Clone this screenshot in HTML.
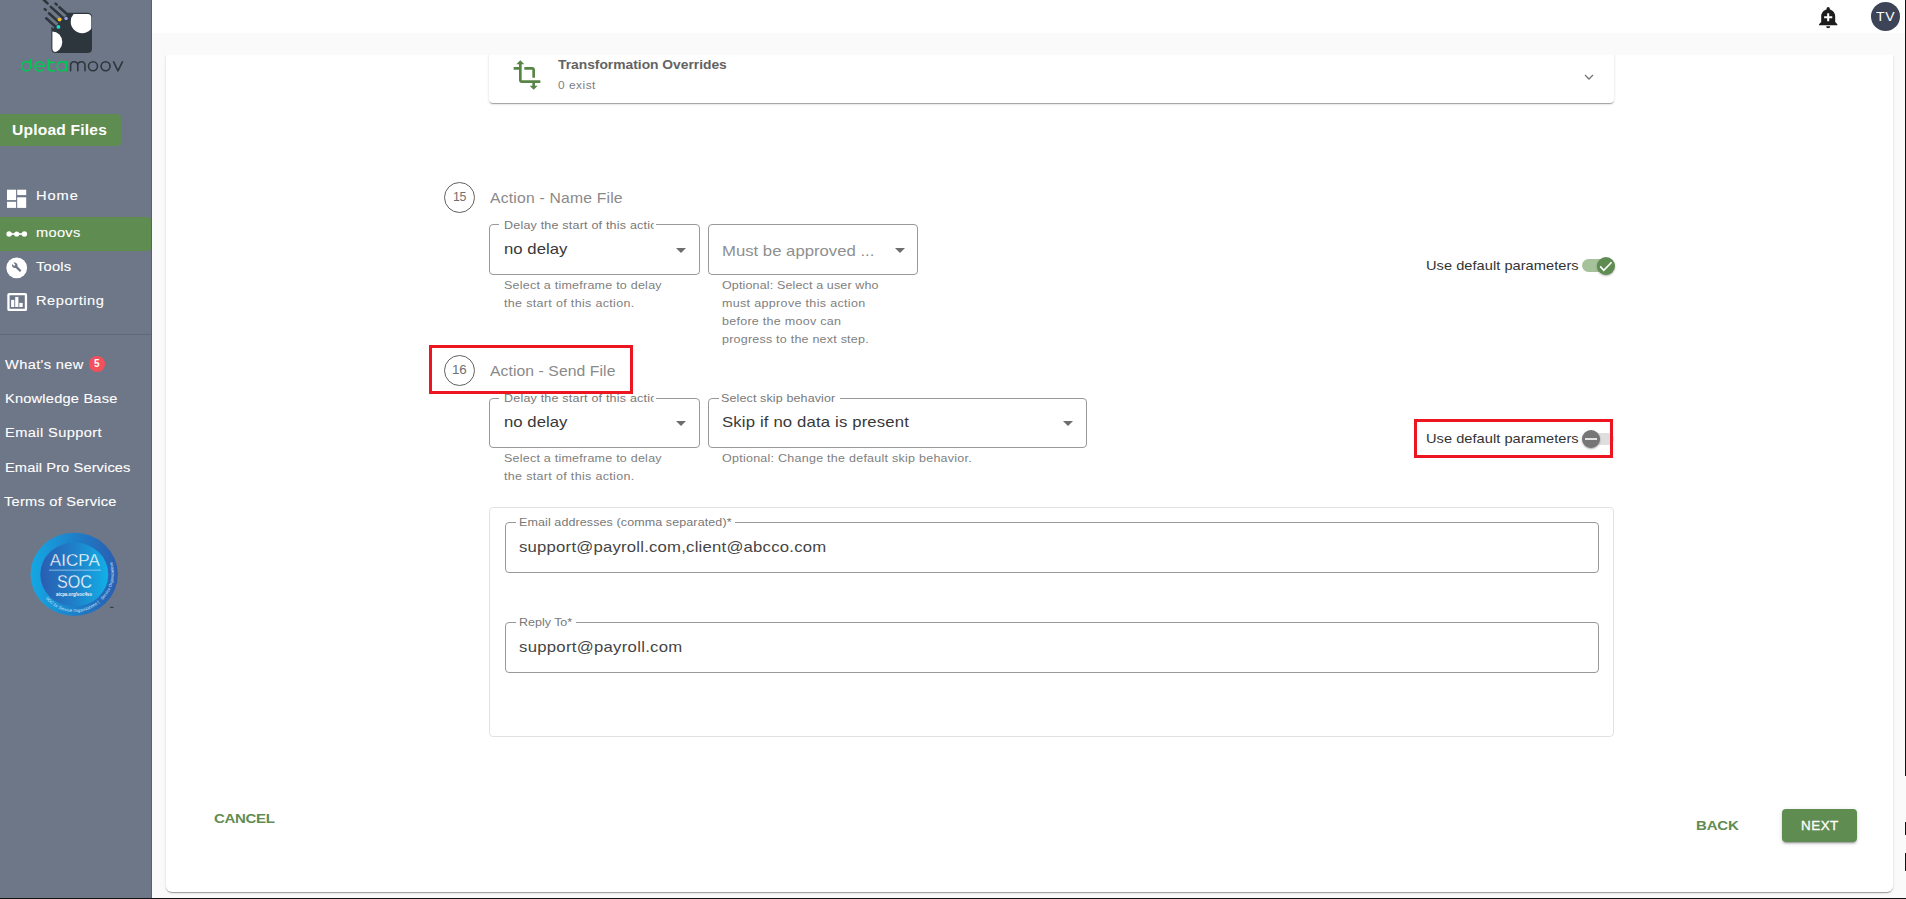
<!DOCTYPE html>
<html lang="en"><head><meta charset="utf-8"><title>detamoov</title>
<style>
*{box-sizing:border-box;margin:0;padding:0}
html,body{width:1906px;height:899px;overflow:hidden;background:#fafafa;font-family:"Liberation Sans",sans-serif;}
body{position:relative}
.abs{position:absolute}
.t{position:absolute;white-space:nowrap;display:block;transform-origin:0 50%}
#sidebar{position:absolute;left:0;top:0;width:152px;height:899px;background:#6e7788;border-right:1px solid #59616f}
#topbar{position:absolute;left:152px;top:0;width:1754px;height:33px;background:#fff}
#card{position:absolute;left:166px;top:55px;width:1727px;height:837px;background:#fff;border-radius:0 0 6px 6px;clip-path:inset(0 -6px -6px -6px);box-shadow:0 2px 1px -1px rgba(0,0,0,.2),0 1px 1px 0 rgba(0,0,0,.14),0 1px 3px 0 rgba(0,0,0,.12)}
#acc{position:absolute;left:489px;top:40px;width:1125px;height:63px;background:#fff;border-radius:4px;box-shadow:0 2px 1px -1px rgba(0,0,0,.2),0 1px 1px 0 rgba(0,0,0,.14),0 1px 3px 0 rgba(0,0,0,.12);clip-path:inset(15px -6px -6px -6px)}
.upload{position:absolute;left:0;top:114px;width:121px;height:32px;background:#5f8c50;border-radius:0 4px 4px 0}
.navsel{position:absolute;left:0;top:217px;width:151px;height:34px;background:#5f8c50;border-radius:0 4px 4px 0}
.divider{position:absolute;left:0;top:334px;width:151px;height:1px;background:#5f6878}
.badge{position:absolute;left:89px;top:356px;width:16px;height:16px;border-radius:50%;background:#f4505c}
.num{position:absolute;width:31px;height:31px;border:1px solid #616161;border-radius:50%}
.sel{position:absolute;height:50px;border:1px solid #999;border-radius:4px;background:#fff}
.notch{position:absolute;height:3px;background:#fff}
.arrow{position:absolute;width:0;height:0;border-left:5px solid transparent;border-right:5px solid transparent;border-top:5px solid #6d6d6d}
.redbox{position:absolute;border:3px solid #ed1620}
.panel{position:absolute;left:489px;top:507px;width:1125px;height:230px;border:1px solid #e2e2e2;border-radius:4px}
.track{position:absolute;border-radius:7px}
.thumb{position:absolute;border-radius:50%}
.nextbtn{position:absolute;left:1782px;top:809px;width:75px;height:33px;background:#5f8c50;border-radius:4px;box-shadow:0 3px 1px -2px rgba(0,0,0,.2),0 2px 2px 0 rgba(0,0,0,.14),0 1px 5px 0 rgba(0,0,0,.12)}
.avatar{position:absolute;left:1871.1px;top:1.8px;width:29.1px;height:29.1px;border-radius:50%;background:#3e4457}
.vline{position:absolute;left:1904.7px;width:1.3px;background:#111}
.hline{position:absolute;left:0;top:897.6px;width:1906px;height:1.4px;background:#111}

</style></head>
<body>
<div id="topbar"></div>
<div id="card"></div>
<div id="acc"></div>
<div id="sidebar"></div>

<!-- logo -->
<svg class="abs" style="left:0;top:0" width="152" height="100" viewBox="0 0 152 100">
  <defs><clipPath id="lc"><rect x="52.4" y="13.9" width="38.9" height="38.2" rx="3.6"/></clipPath></defs>
  <g stroke="#2d353d" stroke-width="2.6" stroke-linecap="round" fill="none">
    <path d="M43.5 -0.5 L47.5 3.4"/><path d="M50.8 6.9 L64 18.8"/>
    <path d="M55.6 3.6 L56.7 4.6"/><path d="M59.4 7.3 L68 15"/>
    <path d="M44.8 9.1 L45.7 9.9"/><path d="M49 13.3 L60 23.200"/>
    <path d="M46.200 18.3 L57 28"/>
  </g>
  <path d="M66 12.8 H87.4 Q92 12.8 92 17.4 V48.5 Q92 53.1 87.4 53.1 H56 Q51.4 53.1 51.4 48.5 V26.6 L53.4 28.4 L67.6 14.2 Z" fill="#2d353d"/>
  <g clip-path="url(#lc)" fill="#fff">
    <circle cx="82.2" cy="21.7" r="11.5"/>
    <ellipse cx="52.3" cy="42" rx="10" ry="10.600"/>
  </g>
  <circle cx="59.5" cy="19.6" r="1.800" fill="#f8c31c"/>
  <circle cx="66.100" cy="18.400" r="1.700" fill="#9da3fb"/>
  <circle cx="58.400" cy="26.900" r="1.900" fill="#14dccf"/>
  <!-- wordmark -->
  <g fill="none" stroke="#00c853" stroke-width="1.65" stroke-linecap="round" stroke-linejoin="round">
    <circle cx="26.2" cy="66.2" r="4.6"/><path d="M30.8 59.5 V66.2"/>
    <path d="M35.2 66.2 H44.3 A4.6 4.6 0 1 0 42.8 69.8"/>
    <path d="M48.6 59.8 V68 Q48.6 70.8 51.4 70.8 H54.2 M48.6 62.4 H54"/>
    <circle cx="61.8" cy="66.2" r="4.6"/><path d="M66.4 61.6 V70.8"/>
  </g>
  <g fill="none" stroke="#2d353d" stroke-width="1.6" stroke-linecap="round" stroke-linejoin="round">
    <path d="M70.6 70.8 V65.5 Q70.6 61.8 74.2 61.8 Q77.8 61.8 77.8 65.5 V70.8 M77.8 65.5 Q77.8 61.8 81.4 61.8 Q85 61.8 85 65.5 V70.8"/>
    <circle cx="93" cy="66.3" r="4.5"/>
    <circle cx="105.6" cy="66.3" r="4.5"/>
    <path d="M113.6 61.8 L118 70.8 L122.4 61.8"/>
  </g>
</svg>

<div class="upload"></div>
<div class="navsel"></div>
<div class="divider"></div>
<div class="badge"></div>

<!-- nav icons -->
<svg class="abs" style="left:0;top:180px" width="40" height="140" viewBox="0 180 40 140">
  <g fill="#fff">
    <rect x="7" y="189.700" width="9.100" height="10.400"/><rect x="7" y="201.800" width="9.100" height="6.100"/>
    <rect x="17.200" y="189.700" width="9" height="5.400"/><rect x="17.200" y="197.300" width="9" height="10.600"/>
    <circle cx="9.100" cy="234" r="2.700"/><circle cx="16.700" cy="234" r="2.600"/><circle cx="24.400" cy="234" r="2.700"/><rect x="9" y="233.200" width="15.400" height="1.600"/>
    <circle cx="16.7" cy="267.8" r="10.4"/>
  </g>
  <g transform="translate(11.600 262.100) scale(0.425)"><path fill="#6e7788" d="M22.7 19l-9.1-9.1c.9-2.3.4-5-1.5-6.9-2-2-5-2.4-7.4-1.3L9 6 6 9 1.6 4.700C.4 7.1.9 10.1 2.9 12.1c1.9 1.9 4.6 2.4 6.9 1.5l9.1 9.1c.4.4 1 .4 1.4 0l2.300-2.300c.5-.4.5-1.100.1-1.400z"/></g>
  <rect x="8.450" y="294.050" width="17.500" height="15.900" rx="0.800" fill="none" stroke="#fff" stroke-width="2.300"/>
  <g fill="#fff"><rect x="11.100" y="299.900" width="3.200" height="7.100"/><rect x="15.200" y="296.900" width="3.200" height="10.100"/><rect x="19.300" y="302.900" width="3.400" height="4.100"/></g>
</svg>

<!-- AICPA badge -->
<svg class="abs" style="left:28px;top:528px" width="96" height="92" viewBox="28 528 96 92">
  <defs>
    <linearGradient id="g1" x1="0" y1="0" x2="1" y2="0"><stop offset="0" stop-color="#14a8e4"/><stop offset="0.55" stop-color="#1f7cc6"/><stop offset="1" stop-color="#2a5db0"/></linearGradient>
    <linearGradient id="g2" x1="0" y1="0" x2="1" y2="0"><stop offset="0" stop-color="#2a5db2"/><stop offset="0.5" stop-color="#1f80c8"/><stop offset="1" stop-color="#12b0e8"/></linearGradient>
    <path id="arc" d="M 45.5 598.5 A 37.5 37.5 0 0 0 100.5 601.5"/>
    <path id="arc2" d="M 102.500 600 A 38 38 0 0 0 111.500 560"/>
  </defs>
  <ellipse cx="74.2" cy="574.3" rx="43.700" ry="41.600" fill="url(#g1)"/>
  <ellipse cx="74.3" cy="574.500" rx="34" ry="32" fill="url(#g2)"/>
  <text x="74.800" y="565.500" font-family="Liberation Sans, sans-serif" font-size="17" fill="#fff" text-anchor="middle" textLength="50" lengthAdjust="spacingAndGlyphs" stroke="url(#g2)" stroke-width="0.35">AICPA</text>
  <rect x="49" y="569.800" width="52" height="0.6" fill="#cfe6f7"/>
  <text x="74.500" y="587.800" font-family="Liberation Sans, sans-serif" font-size="17.500" fill="#fff" text-anchor="middle" textLength="35" lengthAdjust="spacingAndGlyphs" stroke="url(#g2)" stroke-width="0.35">SOC</text>
  <text x="74" y="596" font-family="Liberation Sans, sans-serif" font-size="4.600" font-weight="700" fill="#e8f4fc" text-anchor="middle" textLength="36" lengthAdjust="spacingAndGlyphs">aicpa.org/soc4so</text>
  <text font-family="Liberation Sans, sans-serif" font-size="4.200" fill="#d4ecfa"><textPath href="#arc" textLength="60" lengthAdjust="spacingAndGlyphs">SOC for Service Organizations  |</textPath></text>
  <text font-family="Liberation Sans, sans-serif" font-size="4.200" fill="#d4ecfa"><textPath href="#arc2" textLength="41" lengthAdjust="spacingAndGlyphs">Service Organizations</textPath></text>
  <rect x="110" y="606.800" width="3.600" height="1" fill="#333"/>
</svg>

<!-- top bar -->
<svg class="abs" style="left:1815.9px;top:4.800px" width="24.400" height="24.400" viewBox="0 0 24 24"><path fill="#1c1c1c" d="M10.010 21.010c0 1.100.89 1.990 1.990 1.990s1.990-.89 1.990-1.990h-3.980zm8.870-4.190V11c0-3.250-2.250-5.970-5.290-6.690v-.72C13.590 2.710 12.880 2 12 2s-1.590.71-1.590 1.590v.72C7.370 5.030 5.120 7.750 5.120 11v5.820L3 18.940V20h18v-1.060l-2.120-2.120zM16 13.010h-3v3h-2v-3H8V11h3V8h2v3h3v2.010z"/></svg>
<div class="avatar"></div>

<!-- accordion contents -->
<svg class="abs" style="left:510.800px;top:59px" width="32" height="32" viewBox="0 0 24 24"><path fill="#588547" d="M22 18v-2H8V4h2L7 1 4 4h2v2H2v2h4v8c0 1.100.9 2 2 2h8v2h-2l3 3 3-3h-2v-2h4zM10 8h6v6h2V8c0-1.100-.9-2-2-2h-6v2z"/></svg>
<svg class="abs" style="left:1583.200px;top:72.400px" width="12" height="10" viewBox="0 0 12 10"><path d="M2 3 L6 7 L10 3" fill="none" stroke="#757575" stroke-width="1.300"/></svg>

<!-- section 1 -->
<div class="num" style="left:444px;top:182px"></div>
<div class="sel" style="left:489px;top:224px;width:211px;height:51px"></div>
<div class="notch" style="left:499px;top:223px;width:157px"></div>
<div class="arrow" style="left:676px;top:248px"></div>
<div class="sel" style="left:708px;top:224px;width:210px;height:51px"></div>
<div class="arrow" style="left:894.500px;top:248px"></div>
<div class="track" style="left:1582px;top:258.900px;width:30.500px;height:13.100px;background:#a5c29a"></div>
<div class="thumb" style="left:1596.700px;top:257px;width:18px;height:18px;background:#5f8c50;box-shadow:0 1px 2px rgba(0,0,0,.3)"></div>
<svg class="abs" style="left:1596.700px;top:257px" width="18" height="18" viewBox="0 0 18 18"><path d="M3.200 9.400 L6.800 13.300 L14.600 5.300" fill="none" stroke="#fff" stroke-width="1.600"/></svg>

<!-- section 2 -->
<div class="num" style="left:444px;top:355px"></div>
<div class="sel" style="left:489px;top:398px;width:211px"></div>
<div class="notch" style="left:499px;top:397px;width:157px"></div>
<div class="arrow" style="left:676px;top:421px"></div>
<div class="sel" style="left:708px;top:398px;width:379px"></div>
<div class="notch" style="left:719px;top:397px;width:121px"></div>
<div class="arrow" style="left:1063px;top:421px"></div>
<div class="track" style="left:1584px;top:433.200px;width:29.500px;height:11.600px;background:#dedede"></div>
<div class="thumb" style="left:1582px;top:430px;width:18px;height:18px;background:#767676;box-shadow:0 1px 2px rgba(0,0,0,.35)"></div>
<div class="abs" style="left:1585.300px;top:438px;width:11.700px;height:2px;background:#e2e2e2"></div>

<!-- email panel -->
<div class="panel"></div>
<div class="sel" style="left:505px;top:522px;width:1094px;height:51px"></div>
<div class="notch" style="left:516px;top:521px;width:219px"></div>
<div class="sel" style="left:505px;top:622px;width:1094px;height:51px"></div>
<div class="notch" style="left:516px;top:621px;width:60px"></div>

<div class="nextbtn"></div>


<div class="redbox" style="left:429px;top:345px;width:204px;height:49px"></div>
<div class="redbox" style="left:1414px;top:419px;width:199px;height:39px"></div>
<div class="vline" style="top:0;height:776.200px"></div>
<div class="vline" style="top:821.800px;height:13.200px"></div>
<div class="vline" style="top:852.700px;height:18.500px"></div>
<div class="hline"></div>

<span class="t" style="left:12.00px;top:122.78px;font-size:14.2px;line-height:14.2px;font-weight:700;color:#fff;letter-spacing:0.169px;transform:scaleX(1.1);"><span id="upload">Upload Files</span></span>
<span class="t" style="left:36.00px;top:189.92px;font-size:12.5px;line-height:12.5px;font-weight:400;color:#fff;letter-spacing:0.783px;transform:scaleX(1.17);-webkit-text-stroke:0.1px #fff;"><span id="home">Home</span></span>
<span class="t" style="left:36.00px;top:226.92px;font-size:12.5px;line-height:12.5px;font-weight:400;color:#fff;letter-spacing:0.249px;transform:scaleX(1.17);-webkit-text-stroke:0.1px #fff;"><span id="moovs">moovs</span></span>
<span class="t" style="left:36.00px;top:260.82px;font-size:12.5px;line-height:12.5px;font-weight:400;color:#fff;letter-spacing:0.214px;transform:scaleX(1.17);-webkit-text-stroke:0.1px #fff;"><span id="tools">Tools</span></span>
<span class="t" style="left:36.00px;top:294.52px;font-size:12.5px;line-height:12.5px;font-weight:400;color:#fff;letter-spacing:0.480px;transform:scaleX(1.17);-webkit-text-stroke:0.1px #fff;"><span id="reporting">Reporting</span></span>
<span class="t" style="left:5.00px;top:359.12px;font-size:12.5px;line-height:12.5px;font-weight:400;color:#fff;letter-spacing:0.312px;transform:scaleX(1.17);-webkit-text-stroke:0.1px #fff;"><span id="whatsnew">What's new</span></span>
<span class="t" style="left:5.00px;top:392.52px;font-size:12.5px;line-height:12.5px;font-weight:400;color:#fff;letter-spacing:0.167px;transform:scaleX(1.17);-webkit-text-stroke:0.1px #fff;"><span id="kb">Knowledge Base</span></span>
<span class="t" style="left:5.00px;top:427.22px;font-size:12.5px;line-height:12.5px;font-weight:400;color:#fff;letter-spacing:0.342px;transform:scaleX(1.17);-webkit-text-stroke:0.1px #fff;"><span id="esupport">Email Support</span></span>
<span class="t" style="left:5.00px;top:461.62px;font-size:12.5px;line-height:12.5px;font-weight:400;color:#fff;letter-spacing:0.092px;transform:scaleX(1.17);-webkit-text-stroke:0.1px #fff;"><span id="epro">Email Pro Services</span></span>
<span class="t" style="left:4.00px;top:495.62px;font-size:12.5px;line-height:12.5px;font-weight:400;color:#fff;letter-spacing:0.205px;transform:scaleX(1.17);-webkit-text-stroke:0.1px #fff;"><span id="tos">Terms of Service</span></span>
<span class="t" style="left:558.00px;top:57.74px;font-size:13.3px;line-height:13.3px;font-weight:700;color:#636363;letter-spacing:-0.011px;transform:scaleX(1.04);"><span id="acc_title">Transformation Overrides</span></span>
<span class="t" style="left:558.00px;top:79.76px;font-size:10.8px;line-height:10.8px;font-weight:400;color:#7d7d7d;letter-spacing:0.464px;transform:scaleX(1.1);"><span id="acc_sub">0 exist</span></span>
<span class="t" style="left:453.00px;top:191.10px;font-size:12.4px;line-height:12.4px;font-weight:400;color:#707070;letter-spacing:-0.371px;transform:scaleX(1.0);"><span id="s1_num">15</span></span>
<span class="t" style="left:490.00px;top:191.00px;font-size:14.3px;line-height:14.3px;font-weight:400;color:#8a8a8a;letter-spacing:0.175px;transform:scaleX(1.1);"><span id="s1_title">Action - Name File</span></span>
<span class="t" style="left:504.00px;top:215.79px;font-size:10.7px;line-height:10.7px;font-weight:400;color:#787878;letter-spacing:0.177px;transform:scaleX(1.17);width:127.69px;overflow:hidden;padding:4px 0;"><span id="s1_lbl">Delay the start of this acti</span>on</span>
<span class="t" style="left:504.00px;top:241.60px;font-size:14.3px;line-height:14.3px;font-weight:400;color:#383838;letter-spacing:0.020px;transform:scaleX(1.17);"><span id="s1_val">no delay</span></span>
<span class="t" style="left:722.00px;top:243.75px;font-size:14.3px;line-height:14.3px;font-weight:400;color:#8f8f8f;letter-spacing:-0.005px;transform:scaleX(1.17);"><span id="s1_ph">Must be approved ...</span></span>
<span class="t" style="left:504.00px;top:279.64px;font-size:10.7px;line-height:10.7px;font-weight:400;color:#808080;letter-spacing:0.199px;transform:scaleX(1.17);"><span id="s1_h1a">Select a timeframe to delay</span></span>
<span class="t" style="left:504.00px;top:297.84px;font-size:10.7px;line-height:10.7px;font-weight:400;color:#808080;letter-spacing:0.283px;transform:scaleX(1.17);"><span id="s1_h1b">the start of this action.</span></span>
<span class="t" style="left:722.00px;top:279.84px;font-size:10.7px;line-height:10.7px;font-weight:400;color:#808080;letter-spacing:0.120px;transform:scaleX(1.17);"><span id="s1_h2a">Optional: Select a user who</span></span>
<span class="t" style="left:722.00px;top:297.84px;font-size:10.7px;line-height:10.7px;font-weight:400;color:#808080;letter-spacing:0.284px;transform:scaleX(1.17);"><span id="s1_h2b">must approve this action</span></span>
<span class="t" style="left:722.00px;top:315.84px;font-size:10.7px;line-height:10.7px;font-weight:400;color:#808080;letter-spacing:0.233px;transform:scaleX(1.17);"><span id="s1_h2c">before the moov can</span></span>
<span class="t" style="left:722.00px;top:333.84px;font-size:10.7px;line-height:10.7px;font-weight:400;color:#808080;letter-spacing:0.189px;transform:scaleX(1.17);"><span id="s1_h2d">progress to the next step.</span></span>
<span class="t" style="left:1426.00px;top:258.94px;font-size:13.3px;line-height:13.3px;font-weight:400;color:#333;letter-spacing:0.026px;transform:scaleX(1.1);"><span id="s1_udp">Use default parameters</span></span>
<span class="t" style="left:452.00px;top:363.90px;font-size:12.4px;line-height:12.4px;font-weight:400;color:#707070;letter-spacing:-0.237px;transform:scaleX(1.08);"><span id="s2_num">16</span></span>
<span class="t" style="left:490.00px;top:364.00px;font-size:14.3px;line-height:14.3px;font-weight:400;color:#8a8a8a;letter-spacing:0.067px;transform:scaleX(1.1);"><span id="s2_title">Action - Send File</span></span>
<span class="t" style="left:504.00px;top:388.79px;font-size:10.7px;line-height:10.7px;font-weight:400;color:#787878;letter-spacing:0.177px;transform:scaleX(1.17);width:127.69px;overflow:hidden;padding:4px 0;"><span id="s2_lbl">Delay the start of this acti</span>on</span>
<span class="t" style="left:504.00px;top:414.60px;font-size:14.3px;line-height:14.3px;font-weight:400;color:#383838;letter-spacing:0.020px;transform:scaleX(1.17);"><span id="s2_val">no delay</span></span>
<span class="t" style="left:721.00px;top:392.84px;font-size:10.7px;line-height:10.7px;font-weight:400;color:#787878;letter-spacing:0.105px;transform:scaleX(1.17);"><span id="s2_lbl2">Select skip behavior</span></span>
<span class="t" style="left:722.00px;top:414.70px;font-size:14.3px;line-height:14.3px;font-weight:400;color:#383838;letter-spacing:0.126px;transform:scaleX(1.17);"><span id="s2_val2">Skip if no data is present</span></span>
<span class="t" style="left:504.00px;top:452.54px;font-size:10.7px;line-height:10.7px;font-weight:400;color:#808080;letter-spacing:0.199px;transform:scaleX(1.17);"><span id="s2_h1a">Select a timeframe to delay</span></span>
<span class="t" style="left:504.00px;top:470.94px;font-size:10.7px;line-height:10.7px;font-weight:400;color:#808080;letter-spacing:0.283px;transform:scaleX(1.17);"><span id="s2_h1b">the start of this action.</span></span>
<span class="t" style="left:722.00px;top:452.94px;font-size:10.7px;line-height:10.7px;font-weight:400;color:#808080;letter-spacing:0.216px;transform:scaleX(1.17);"><span id="s2_h2a">Optional: Change the default skip behavior.</span></span>
<span class="t" style="left:1426.00px;top:432.14px;font-size:13.3px;line-height:13.3px;font-weight:400;color:#333;letter-spacing:0.026px;transform:scaleX(1.1);"><span id="s2_udp">Use default parameters</span></span>
<span class="t" style="left:519.00px;top:516.99px;font-size:10.7px;line-height:10.7px;font-weight:400;color:#787878;letter-spacing:0.086px;transform:scaleX(1.17);"><span id="em_lbl">Email addresses (comma separated)*</span></span>
<span class="t" style="left:519.00px;top:539.80px;font-size:14.3px;line-height:14.3px;font-weight:400;color:#454545;letter-spacing:0.178px;transform:scaleX(1.17);"><span id="em_val">support@payroll.com,client@abcco.com</span></span>
<span class="t" style="left:519.00px;top:616.99px;font-size:10.7px;line-height:10.7px;font-weight:400;color:#787878;letter-spacing:-0.012px;transform:scaleX(1.17);"><span id="rt_lbl">Reply To*</span></span>
<span class="t" style="left:519.00px;top:639.80px;font-size:14.3px;line-height:14.3px;font-weight:400;color:#454545;letter-spacing:0.234px;transform:scaleX(1.17);"><span id="rt_val">support@payroll.com</span></span>
<span class="t" style="left:214.00px;top:812.03px;font-size:13.2px;line-height:13.2px;font-weight:700;color:#5f8c50;letter-spacing:-0.288px;transform:scaleX(1.14);"><span id="cancel">CANCEL</span></span>
<span class="t" style="left:1696.00px;top:819.13px;font-size:13.2px;line-height:13.2px;font-weight:700;color:#5f8c50;letter-spacing:-0.184px;transform:scaleX(1.14);"><span id="back">BACK</span></span>
<span class="t" style="left:1801.00px;top:818.63px;font-size:13.2px;line-height:13.2px;font-weight:400;color:#fff;letter-spacing:0.471px;transform:scaleX(1.02);-webkit-text-stroke:0.3px #fff;"><span id="next">NEXT</span></span>
<span class="t" style="left:1876.00px;top:11.22px;font-size:12.5px;line-height:12.5px;font-weight:400;color:#fff;letter-spacing:0.648px;transform:scaleX(1.12);"><span id="tv">TV</span></span>
<span class="t" style="left:94.00px;top:358.84px;font-size:10px;line-height:10px;font-weight:700;color:#fff;letter-spacing:2.084px;transform:scaleX(1.0);"><span id="badge5">5</span></span>
</body></html>
